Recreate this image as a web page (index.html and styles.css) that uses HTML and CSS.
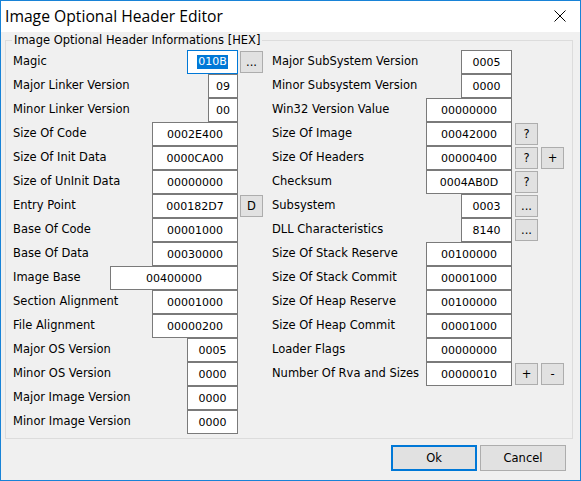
FILE: index.html
```html
<!DOCTYPE html>
<html>
<head>
<meta charset="utf-8">
<link rel="stylesheet" href="styles.css">
</head>
<body>
<div class="window">
  <div class="titlebar">
    <span class="title">Image Optional Header Editor</span>
    <svg class="close" width="12" height="12" viewBox="0 0 12 12"><path d="M0.5 0.5 L11.5 11.5 M11.5 0.5 L0.5 11.5" stroke="#000" stroke-width="1" fill="none"/></svg>
  </div>
  <div class="client">
    <div class="group">
      <div class="legend">Image Optional Header Informations [HEX]</div>
      <div class="cols">
        <div class="col left">
          <div class="row"><span class="lbl">Magic</span><span class="fld w51 focus"><span class="sel">010B</span></span><span class="btns"><span class="btn">...</span></span></div>
          <div class="row"><span class="lbl">Major Linker Version</span><span class="fld w30">09</span><span class="btns"></span></div>
          <div class="row"><span class="lbl">Minor Linker Version</span><span class="fld w30">00</span><span class="btns"></span></div>
          <div class="row"><span class="lbl">Size Of Code</span><span class="fld w86">0002E400</span><span class="btns"></span></div>
          <div class="row"><span class="lbl">Size Of Init Data</span><span class="fld w86">0000CA00</span><span class="btns"></span></div>
          <div class="row"><span class="lbl">Size of UnInit Data</span><span class="fld w86">00000000</span><span class="btns"></span></div>
          <div class="row"><span class="lbl">Entry Point</span><span class="fld w86">000182D7</span><span class="btns"><span class="btn">D</span></span></div>
          <div class="row"><span class="lbl">Base Of Code</span><span class="fld w86">00001000</span><span class="btns"></span></div>
          <div class="row"><span class="lbl">Base Of Data</span><span class="fld w86">00030000</span><span class="btns"></span></div>
          <div class="row"><span class="lbl">Image Base</span><span class="fld w128">00400000</span><span class="btns"></span></div>
          <div class="row"><span class="lbl">Section Alignment</span><span class="fld w86">00001000</span><span class="btns"></span></div>
          <div class="row"><span class="lbl">File Alignment</span><span class="fld w86">00000200</span><span class="btns"></span></div>
          <div class="row"><span class="lbl">Major OS Version</span><span class="fld w51">0005</span><span class="btns"></span></div>
          <div class="row"><span class="lbl">Minor OS Version</span><span class="fld w51">0000</span><span class="btns"></span></div>
          <div class="row"><span class="lbl">Major Image Version</span><span class="fld w51">0000</span><span class="btns"></span></div>
          <div class="row"><span class="lbl">Minor Image Version</span><span class="fld w51">0000</span><span class="btns"></span></div>
        </div>
        <div class="col right">
          <div class="row"><span class="lbl">Major SubSystem Version</span><span class="fld w51">0005</span><span class="btns"></span></div>
          <div class="row"><span class="lbl">Minor Subsystem Version</span><span class="fld w51">0000</span><span class="btns"></span></div>
          <div class="row"><span class="lbl">Win32 Version Value</span><span class="fld w86">00000000</span><span class="btns"></span></div>
          <div class="row"><span class="lbl">Size Of Image</span><span class="fld w86">00042000</span><span class="btns"><span class="btn">?</span></span></div>
          <div class="row"><span class="lbl">Size Of Headers</span><span class="fld w86">00000400</span><span class="btns"><span class="btn">?</span><span class="btn">+</span></span></div>
          <div class="row"><span class="lbl">Checksum</span><span class="fld w86">0004AB0D</span><span class="btns"><span class="btn">?</span></span></div>
          <div class="row"><span class="lbl">Subsystem</span><span class="fld w51">0003</span><span class="btns"><span class="btn">...</span></span></div>
          <div class="row"><span class="lbl">DLL Characteristics</span><span class="fld w51">8140</span><span class="btns"><span class="btn">...</span></span></div>
          <div class="row"><span class="lbl">Size Of Stack Reserve</span><span class="fld w86">00100000</span><span class="btns"></span></div>
          <div class="row"><span class="lbl">Size Of Stack Commit</span><span class="fld w86">00001000</span><span class="btns"></span></div>
          <div class="row"><span class="lbl">Size Of Heap Reserve</span><span class="fld w86">00100000</span><span class="btns"></span></div>
          <div class="row"><span class="lbl">Size Of Heap Commit</span><span class="fld w86">00001000</span><span class="btns"></span></div>
          <div class="row"><span class="lbl">Loader Flags</span><span class="fld w86">00000000</span><span class="btns"></span></div>
          <div class="row"><span class="lbl">Number Of Rva and Sizes</span><span class="fld w86">00000010</span><span class="btns"><span class="btn">+</span><span class="btn">-</span></span></div>
        </div>
      </div>
    </div>
    <div class="actions">
      <span class="pbtn default">Ok</span>
      <span class="pbtn">Cancel</span>
    </div>
  </div>
</div>
</body>
</html>
```
FILE: styles.css
```css
* { box-sizing: border-box; }
html, body { margin: 0; padding: 0; background: #f0f0f0; }
.window {
  width: 581px;
  height: 481px;
  border: 1px solid #1883d7;
  background: #f0f0f0;
  display: flex;
  flex-direction: column;
  font-family: "DejaVu Sans", sans-serif;
  font-size: 11.5px;
  color: #000;
}
.titlebar {
  height: 31px;
  background: #fff;
  display: flex;
  align-items: center;
  justify-content: space-between;
  padding: 0 14px 0 4px;
  flex: none;
}
.title {
  font-family: "Open Sans", sans-serif;
  font-size: 15.7px;
  color: #000;
  margin-top: -1px;
}
.close { display: block; margin-top: -1px; }
.client {
  flex: 1;
  display: flex;
  flex-direction: column;
  padding: 8px 7px 0 4px;
}
.group {
  position: relative;
  border: 1px solid #dcdcdc;
  height: 399px;
  padding: 9px 0 0 7px;
}
.legend {
  position: absolute;
  left: 6px;
  top: -9px;
  padding: 0 2px 0 2px;
  background: #f0f0f0;
  line-height: 16px;
}
.cols {
  display: flex;
  gap: 9px;
}
.col { display: flex; flex-direction: column; flex: none; }
.col.left { width: 250px; }
.col.right { width: 292px; }
.row {
  height: 24px;
  display: flex;
  align-items: flex-start;
}
.lbl {
  flex: 1;
  min-width: 0;
  line-height: 22px;
  white-space: nowrap;
}
.fld {
  flex: none;
  height: 24px;
  border: 1px solid #7a7a7a;
  background: #fff;
  display: flex;
  align-items: center;
  justify-content: center;
  font-size: 11px;
}
.fld.focus { border-color: #0078d7; }
.sel { background: #0078d7; color: #fff; padding: 0 1px; line-height: 14px; }
.w30 { width: 30px; }
.w51 { width: 51px; }
.w86 { width: 86px; }
.w128 { width: 128px; }
.btns {
  flex: none;
  display: flex;
  gap: 3px;
}
.left .btns { width: 25px; padding-left: 2px; }
.right .btns { width: 52px; padding-left: 3px; }
.btn {
  width: 23px;
  height: 22px;
  margin-top: 1px;
  border: 1px solid #adadad;
  background: #e1e1e1;
  display: flex;
  align-items: center;
  justify-content: center;
  font-size: 11.5px;
  flex: none;
}
.actions {
  display: flex;
  justify-content: flex-end;
  gap: 3px;
  padding: 6px 7px 0 0;
}
.pbtn {
  width: 86px;
  height: 26px;
  border: 1px solid #adadad;
  background: #e1e1e1;
  display: flex;
  align-items: center;
  justify-content: center;
  font-size: 11.5px;
}
.pbtn.default { border: 2px solid #0078d7; }
```
